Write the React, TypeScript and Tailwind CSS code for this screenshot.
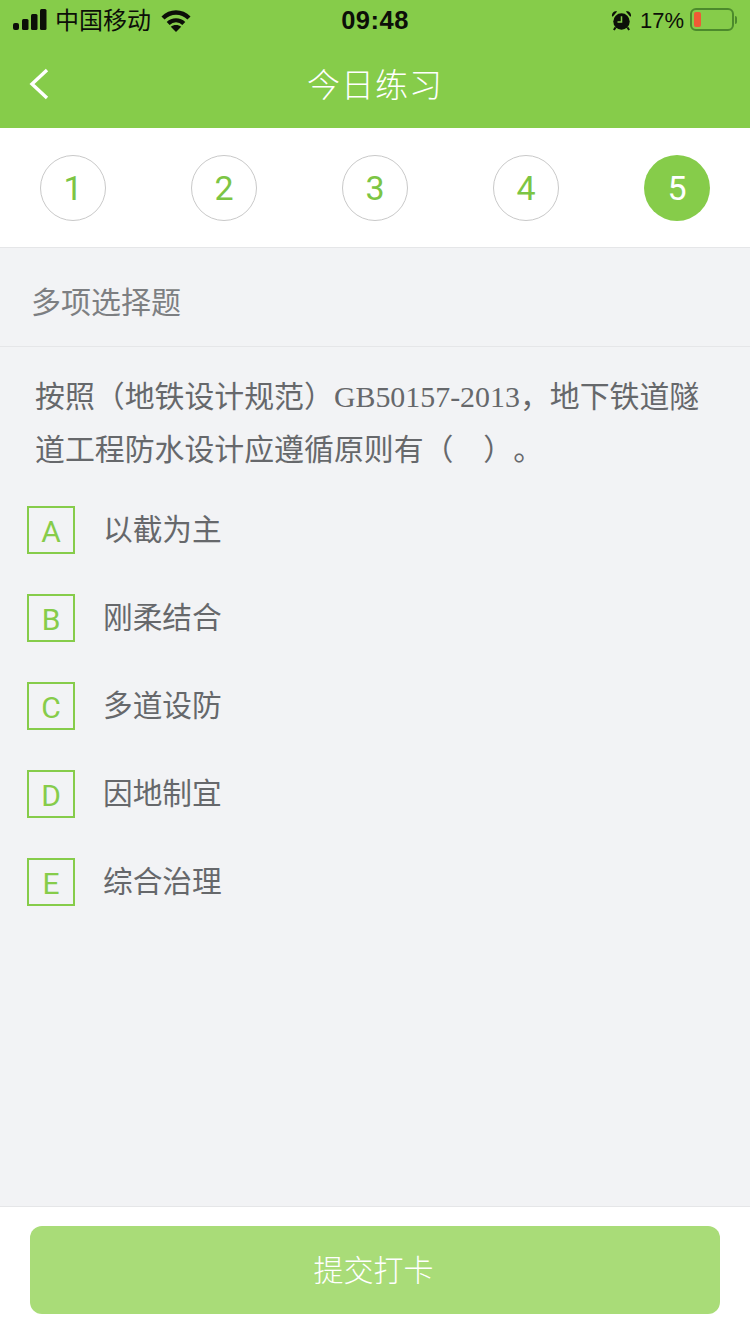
const steps = ['1', '2', '3', '4', '5'];

const options = [
    { key: 'A', label: '以截为主' },
    { key: 'B', label: '刚柔结合' },
    { key: 'C', label: '多道设防' },
    { key: 'D', label: '因地制宜' },
    { key: 'E', label: '综合治理' },
];

function StatusBar() {
    return (
        <div className="grid grid-cols-3 items-center h-10 pl-[13px] pr-[13px] text-[#0c0f08]">
            <div className="flex items-center">
                <svg width="34" height="22" viewBox="0 0 34 22" fill="currentColor">
                    <rect x="0" y="14" width="6" height="7" rx="2" />
                    <rect x="9" y="10" width="6.5" height="11" rx="1.5" />
                    <rect x="18" y="5" width="6.5" height="16" rx="1.5" />
                    <rect x="27" y="0" width="6.5" height="21" rx="1.5" />
                </svg>
                <span className="ml-[8px] mt-[2px] text-[24px] leading-none">中国移动</span>
                <svg className="ml-[10px]" width="30" height="23" viewBox="0 0 30 23" fill="none" stroke="currentColor">
                    <path d="M2 9C9.5 1.6 20.5 1.6 28 9" strokeWidth="4.4" />
                    <path d="M7.2 14.4C11.5 10.2 18.5 10.2 22.8 14.4" strokeWidth="4.2" />
                    <path d="M15 23L9.8 17.8C12.5 15.4 17.5 15.4 20.2 17.8Z" fill="currentColor" stroke="none" />
                </svg>
            </div>
            <div className="mt-[2px] text-center text-[25.5px] font-semibold leading-none tracking-[0.5px]">09:48</div>
            <div className="flex items-center justify-end">
                <svg width="21" height="21" viewBox="0 0 22 22" fill="currentColor">
                    <circle cx="11" cy="12" r="8.6" />
                    <path d="M1 6.4C0.8 3 3.6 0.8 6.4 1.6L1.8 7ZM21 6.4C21.2 3 18.4 0.8 15.6 1.6L20.2 7Z" />
                    <path d="M4.8 18.2L3 21M17.2 18.2L19 21" stroke="currentColor" strokeWidth="2" />
                    <path d="M11 6.5V12.5H6.8" fill="none" stroke="#86cc4a" strokeWidth="1.6" />
                </svg>
                <span className="ml-[8px] mt-[2px] text-[22px] leading-none">17%</span>
                <div className="ml-[6px] -mt-[1px] flex items-center">
                    <div className="w-[44px] h-[23px] rounded-[6px] border-2 border-[#4c8a2c] p-[2px]">
                        <div className="w-[7px] h-full rounded-[2px] bg-[#ef5a35]" />
                    </div>
                    <div className="ml-[1px] w-[2px] h-[8px] rounded-r-sm bg-[#4c8a2c]" />
                </div>
            </div>
        </div>
    );
}

export default function App() {
    const cjk = { fontFamily: '"Noto Sans CJK SC", "Noto Sans", sans-serif' };

    return (
        <div
            className="flex flex-col h-[1334px] w-[750px] bg-[#f2f3f5] font-['Liberation_Sans','Noto_Sans_CJK_SC',sans-serif]"
        >
            {/* Header */}
            <div className="bg-[#86cc4a] h-[128px]">
                <StatusBar />
                <div className="relative flex items-center justify-center h-[88px]">
                    <svg className="absolute left-[28px] top-[28px]" width="22" height="32" viewBox="0 0 22 32" fill="none" stroke="white" strokeWidth="3.4">
                        <path d="M19 2L4 16L19 30" />
                    </svg>
                    <h1 className="-mt-[1px] text-[33px] font-light text-white tracking-[1px]" style={cjk}>今日练习</h1>
                </div>
            </div>

            {/* Step numbers */}
            <div className="flex justify-between px-10 pt-[27px] pb-[26px] bg-white border-b border-[#e5e6e8]">
                {steps.map((s) => (
                    <div
                        key={s}
                        className={`flex items-center justify-center w-[66px] h-[66px] rounded-full font-['Roboto'] text-[34px] ${
                            s === '5' ? 'bg-[#86cc4a] text-white' : 'border border-[#c9c9c9] text-[#7cc544]'
                        }`}
                    >
                        {s}
                    </div>
                ))}
            </div>

            {/* Question type */}
            <div className="flex items-center h-[99px] pl-[31px] pt-[6px] border-b border-[#e5e6e8] text-[30px] text-[#7d7f82]" style={cjk}>
                多项选择题
            </div>

            {/* Question */}
            <p className="px-[35px] pt-[23px] text-[29.9px] leading-[53px] text-[#66686b] [text-spacing-trim:space-all] font-['Liberation_Serif','Noto_Sans_CJK_SC',serif]">
                按照（地铁设计规范）GB50157-2013，地下铁道隧道工程防水设计应遵循原则有（&nbsp;&nbsp;&nbsp;&nbsp;）。
            </p>

            {/* Options */}
            <div className="flex flex-col gap-10 pl-[27px] pt-[30px]">
                {options.map((o) => (
                    <div key={o.key} className="flex items-center gap-7">
                        <div className="flex items-center justify-center w-12 h-12 pt-[3px] border-2 border-[#86cc4a] font-['Roboto'] text-[30px] text-[#86cc4a]">
                            {o.key}
                        </div>
                        <span className="-mt-[3px] text-[29.7px] text-[#66686b]" style={cjk}>{o.label}</span>
                    </div>
                ))}
            </div>

            {/* Submit */}
            <div className="mt-auto h-[128px] px-[30px] pt-[19px] bg-white border-t border-[#e5e6e8]">
                <button className="w-full h-[88px] pr-[3px] pb-[4px] rounded-[12px] bg-[#a9dc78] text-[30px] font-light text-white" style={cjk}>
                    提交打卡
                </button>
            </div>
        </div>
    );
}
